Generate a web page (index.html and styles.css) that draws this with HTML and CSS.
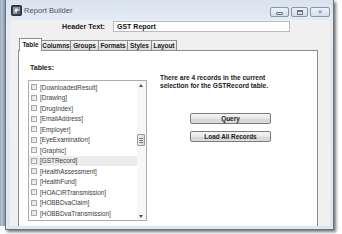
FILE: index.html
```html
<!DOCTYPE html>
<html>
<head>
<meta charset="utf-8">
<link rel="stylesheet" href="styles.css">
</head>
<body>
<div class="desk">
  <div class="strip"></div>
  <div class="win">
    <div class="titlebar">
      <svg class="appicon" width="11" height="11" viewBox="0 0 11 11">
        <rect x="0.5" y="0.5" width="10" height="10" rx="1" fill="#3c4452" stroke="#2a303a"/>
        <rect x="2" y="2" width="7" height="7" fill="#8f98a6"/>
        <circle cx="5.5" cy="5.5" r="2" fill="#e4e8ee"/>
        <rect x="6" y="6" width="3" height="3" fill="#5b6473"/>
      </svg>
      <span class="title">Report Builder</span>
      <div class="capbtns">
        <div class="cap min"><span class="g-min"></span></div>
        <div class="cap max"><span class="g-max"></span></div>
        <div class="cap close"><span class="g-close">✕</span></div>
      </div>
    </div>
    <div class="client">
      <div class="hdr">
        <span class="hdrlbl">Header Text:</span>
        <div class="textbox">GST Report</div>
      </div>
      <div class="tabs">
        <div class="tab sel">Table</div>
        <div class="tab">Columns</div>
        <div class="tab">Groups</div>
        <div class="tab">Formats</div>
        <div class="tab">Styles</div>
        <div class="tab">Layout</div>
      </div>
      <div class="page">
        <div class="leftcol">
          <div class="tlabel">Tables:</div>
          <div class="list">
            <div class="items">
              <div class="item"><span class="cb"></span>[DownloadedResult]</div>
              <div class="item"><span class="cb"></span>[Drawing]</div>
              <div class="item"><span class="cb"></span>[DrugIndex]</div>
              <div class="item"><span class="cb"></span>[EmailAddress]</div>
              <div class="item"><span class="cb"></span>[Employer]</div>
              <div class="item"><span class="cb"></span>[EyeExamination]</div>
              <div class="item"><span class="cb"></span>[Graphic]</div>
              <div class="item hl"><span class="cb"></span>[GSTRecord]</div>
              <div class="item"><span class="cb"></span>[HealthAssessment]</div>
              <div class="item"><span class="cb"></span>[HealthFund]</div>
              <div class="item"><span class="cb"></span>[HOACIRTransmission]</div>
              <div class="item"><span class="cb"></span>[HOBBDvaClaim]</div>
              <div class="item"><span class="cb"></span>[HOBBDvaTransmission]</div>
            </div>
            <div class="vscroll">
              <div class="arrow up"></div>
              <div class="track"><div class="thumb"><span></span><span></span><span></span></div></div>
              <div class="arrow down"></div>
            </div>
          </div>
        </div>
        <div class="rightcol">
          <div class="info">There are 4 records in the current selection for the GSTRecord table.</div>
          <div class="btns">
            <div class="btn">Query</div>
            <div class="btn">Load All Records</div>
          </div>
        </div>
      </div>
    </div>
  </div>
</div>
</body>
</html>
```

FILE: styles.css
```css
* { box-sizing: border-box; }
html, body { margin: 0; padding: 0; }
body {
  width: 342px; height: 234px; overflow: hidden;
  background: #ffffff;
  font-family: "Liberation Sans", Arial, sans-serif;
}
.desk { display: flex; align-items: flex-start; height: 234px; }
.strip {
  width: 5px; height: 226px;
  background: linear-gradient(90deg, #9aa8b8 0, #b8c6d6 2px, #8fa0b4 4px);
}
.win {
  width: 329px; height: 230px;
  display: flex; flex-direction: column;
  background: linear-gradient(180deg, #d9e3ef 0, #e4ebf3 20px, #dde7f2 100%);
  border: 1px solid #6b7280; border-top: none;
  box-shadow: 2px 2px 3px rgba(0,0,0,0.55);
  padding: 0 3px 3px 4px;
}
.titlebar {
  height: 20px; flex: none;
  display: flex; align-items: center;
  padding-left: 1px;
}
.appicon { flex: none; margin-top: 1px; }
.title { font-size: 7.6px; color: #4b5563; margin-left: 2px; margin-top: 1px; }
.capbtns { margin-left: auto; display: flex; gap: 2px; align-self: flex-start; margin-top: 7px; }
.cap {
  height: 10px; border: 1px solid #8796aa; border-radius: 2px;
  background: linear-gradient(180deg, #eef2f7, #d6dee8);
  display: flex; align-items: center; justify-content: center;
}
.cap.min { width: 19px; }
.cap.max { width: 17px; }
.cap.close { width: 20px; }
.g-min { width: 7px; height: 3px; border: 1px solid #6a7585; border-radius: 1px; margin-top: 2px; }
.g-max { width: 6px; height: 5px; border: 1px solid #6a7585; border-top-width: 2px; }
.g-close { font-size: 6px; line-height: 6px; color: #6a7585; font-family: "DejaVu Sans", sans-serif; }
.client {
  flex: 1;
  background: #f0f0f0;
  padding: 1px 12px 0 8px;
  display: flex; flex-direction: column;
}
.hdr { display: flex; align-items: center; height: 11px; }
.hdrlbl {
  width: 87px; text-align: right;
  font-size: 7.2px; font-weight: bold; color: #1a1a1a;
}
.textbox {
  margin-left: 8px; width: 177px; height: 11px;
  border: 1px solid #b8bcc2; background: #fff;
  font-size: 7px; font-weight: bold; color: #111;
  padding-left: 3px; line-height: 9px;
}
.tabs { display: flex; align-items: flex-end; height: 15px; margin-top: 3px; padding-left: 1px; }
.tab {
  height: 10px; border: 1px solid #8d8d8d; border-bottom: none; border-left: none;
  background: linear-gradient(180deg, #f4f4f4, #dcdcdc);
  font-size: 6.4px; font-weight: bold; color: #1a1a1a;
  display: flex; align-items: center; justify-content: center;
}
.tab:nth-child(2) { border-left: none; }
.tab.sel {
  height: 13px; background: #fff; border-left: 1px solid #8d8d8d;
  margin-bottom: -1px; position: relative; z-index: 1;
  align-items: flex-start; padding-top: 2px;
}
.tabs .tab:nth-child(1) { width: 23px; }
.tabs .tab:nth-child(2) { width: 29px; }
.tabs .tab:nth-child(3) { width: 28px; }
.tabs .tab:nth-child(4) { width: 29px; }
.tabs .tab:nth-child(5) { width: 24px; }
.tabs .tab:nth-child(6) { width: 25px; border-right: 1px solid #8d8d8d; }
.page {
  flex: 1; background: #fff;
  border: 1px solid #8d8d8d; border-bottom: none;
  display: flex;
  padding: 0 0 0 9px;
}
.leftcol { width: 119px; display: flex; flex-direction: column; }
.tlabel { font-size: 7px; font-weight: bold; color: #1a1a1a; margin-top: 12px; height: 9px; line-height: 9px; padding-left: 2px; }
.list {
  margin-top: 8px; height: 141px;
  border: 1px solid #a9acb2; background: #fff;
  display: flex;
}
.items { flex: 1; padding-top: 1px; }
.item {
  height: 10.5px; display: flex; align-items: center;
  font-size: 6.4px; color: #3a3a3a; padding-left: 2px;
}
.item.hl { background: #ececec; }
.cb {
  width: 6px; height: 6px; flex: none;
  border: 1px solid #a4a8ae;
  background: linear-gradient(135deg, #dcdfe3, #f7f7f7);
  margin-right: 3px;
}
.vscroll { width: 9px; display: flex; flex-direction: column; background: #f7f7f7; }
.arrow { height: 9px; position: relative; }
.arrow::after {
  content: ""; position: absolute; left: 2px; top: 3px;
  border-left: 2.5px solid transparent; border-right: 2.5px solid transparent;
}
.arrow.up::after { border-bottom: 3px solid #505050; }
.arrow.down::after { border-top: 3px solid #505050; top: 4px; }
.track { flex: 1; position: relative; }
.thumb {
  position: absolute; left: 0; right: 1px; top: 44px; height: 12px;
  border: 1px solid #9a9a9a; border-radius: 1px;
  background: linear-gradient(90deg, #f2f2f2, #dadada);
  display: flex; flex-direction: column; align-items: center; justify-content: center; gap: 1px;
}
.thumb span { width: 4px; height: 1px; background: #7a7a7a; }
.rightcol { margin-left: 13px; display: flex; flex-direction: column; }
.info {
  width: 118px; margin-top: 23px;
  font-size: 6.6px; font-weight: bold; color: #1a1a1a; line-height: 8px;
}
.btns { margin-left: 30px; margin-top: 23px; display: flex; flex-direction: column; gap: 7px; }
.btn {
  width: 81px; height: 11px;
  border: 1px solid #7a7a7a; border-radius: 2px;
  background: linear-gradient(180deg, #f6f6f6 0, #e6e6e6 50%, #d6d6d6 51%, #dcdcdc 100%);
  font-size: 6.4px; font-weight: bold; color: #1a1a1a;
  display: flex; align-items: center; justify-content: center;
}
```
